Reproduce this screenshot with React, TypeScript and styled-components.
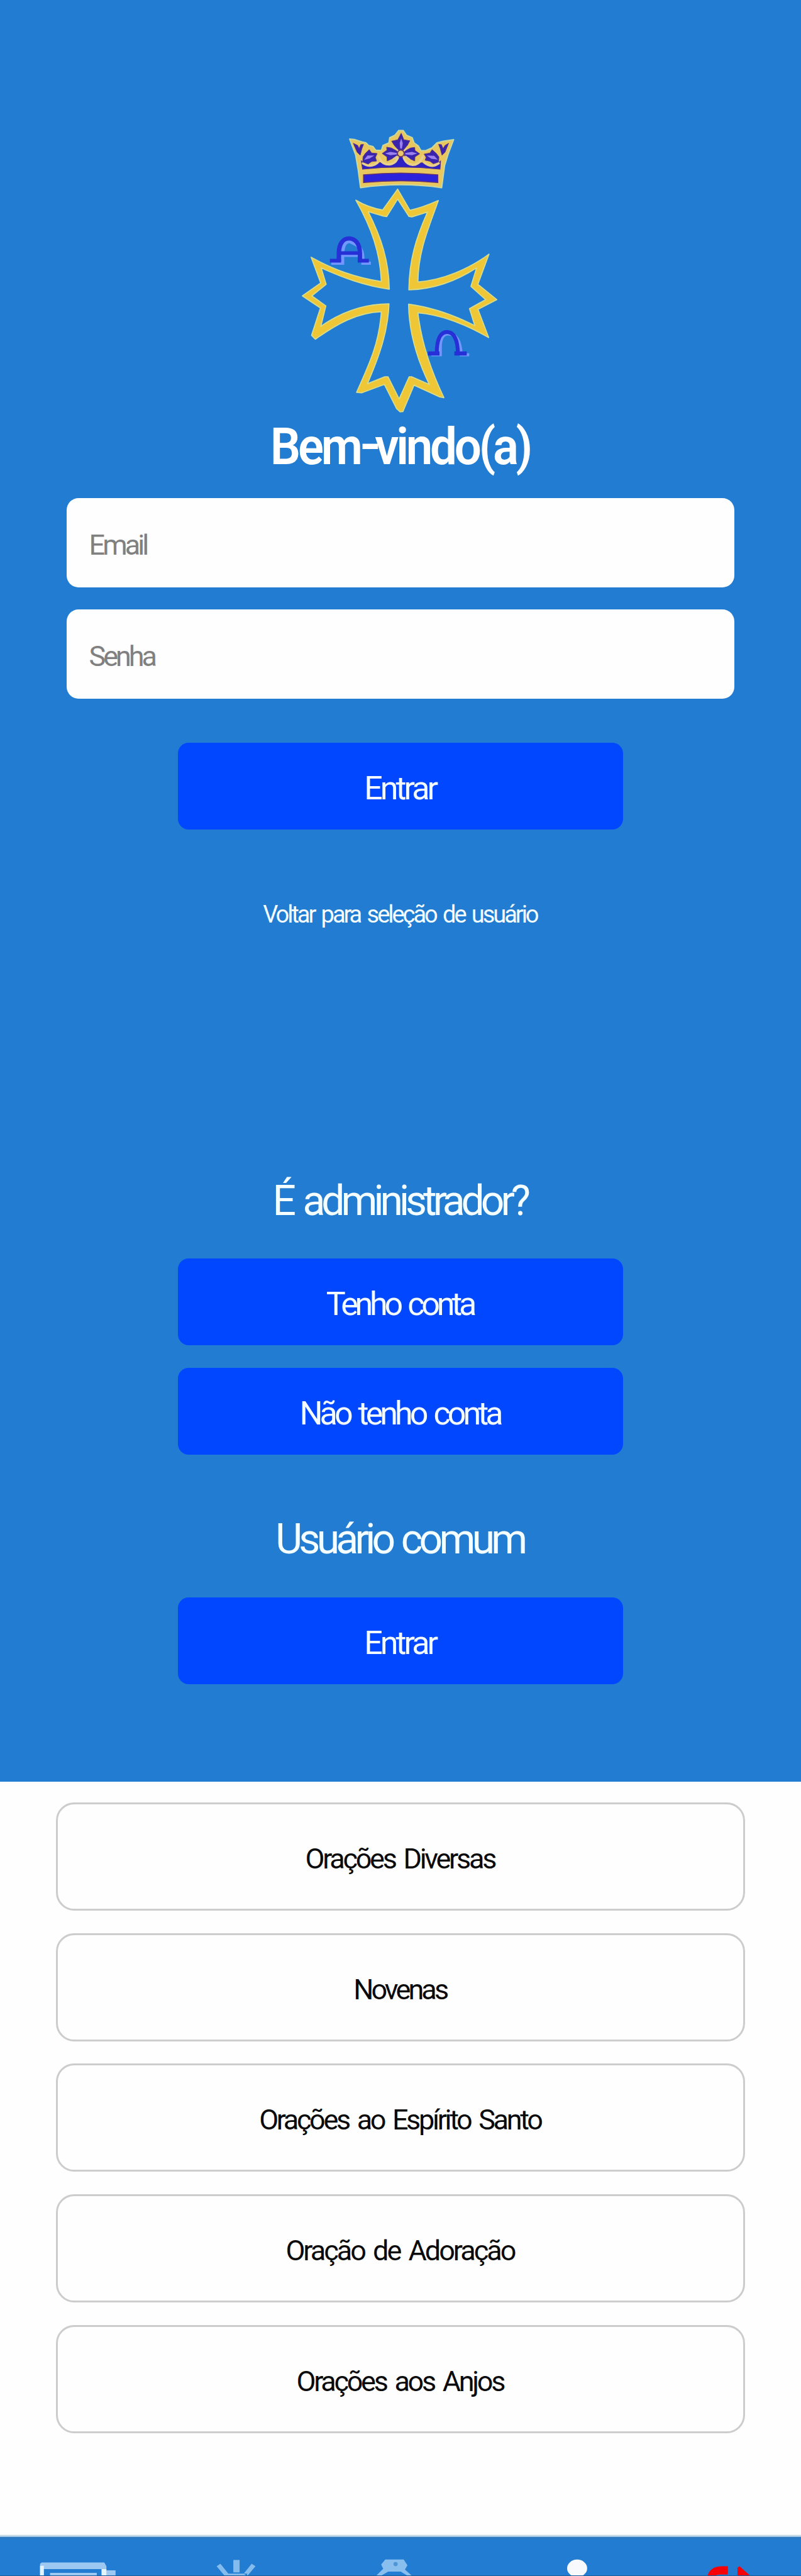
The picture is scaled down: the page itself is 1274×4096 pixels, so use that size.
import React from 'react';
import styled, { createGlobalStyle } from 'styled-components';

const BLUE = '#227dd2';
const ACTION = '#0047ff';

const GlobalStyle = createGlobalStyle`
  *, *::before, *::after { box-sizing: border-box; }
  body { margin: 0; background: #fefefe; font-family: Roboto, "Liberation Sans", sans-serif; }
`;

const Page = styled.div`
  display: flex;
  flex-direction: column;
  width: 1274px;
  height: 4096px;
  overflow: hidden;
  background: #fefefe;
`;

const Login = styled.section`
  display: flex;
  flex-direction: column;
  align-items: center;
  flex: none;
  height: 2833px;
  padding-top: 199px;
  background: ${BLUE};
  color: #f4fdff;
`;

/* Tight tracking; the indent balances part of the trailing letter gap on centred lines. */
const Line = styled.span<{ $track: number; $word?: number }>`
  display: block;
  letter-spacing: ${(p) => p.$track}px;
  word-spacing: ${(p) => p.$word ?? 0}px;
  text-indent: ${(p) => p.$track * 0.4}px;
  white-space: nowrap;
`;

const Emblem = styled.svg`
  display: block;
  flex: none;
  width: 345px;
  height: 462px;
`;

const Title = styled.h1`
  margin: 1px 0 34px;
  font-size: 82px;
  font-weight: 600;
  line-height: 96px;
  color: #fff;
  transform: scaleX(0.93);
`;

const Dash = styled.span`
  display: inline-block;
  text-indent: 0;
  transform: translate(2px, -3px) scaleX(1.2);
`;

const Fields = styled.div`
  display: flex;
  flex-direction: column;
  gap: 35px;
  width: 1062px;
  margin-bottom: 70px;
`;

const Field = styled.div`
  display: flex;
  align-items: center;
  height: 142px;
  padding: 6px 37px 0;
  border-radius: 19px;
  background: #fefefe;
  color: #808080;
  font-size: 45px;
`;

const Action = styled.button`
  display: flex;
  align-items: center;
  justify-content: center;
  flex: none;
  width: 708px;
  height: 138px;
  padding: 6px 0 0;
  border: 0;
  border-radius: 17px;
  background: ${ACTION};
  color: #f4fbff;
  font-family: inherit;
  font-size: 52px;
`;

const BackLink = styled.a`
  margin: 113px 0 395px;
  font-size: 38px;
  line-height: 44px;
`;

const Heading = styled.h2`
  margin: 0;
  font-size: 66px;
  font-weight: 400;
  line-height: 78px;
`;

const Choices = styled.div<{ $top: number }>`
  display: flex;
  flex-direction: column;
  gap: 36px;
  margin-top: ${(p) => p.$top}px;
`;

const CommonUser = styled.div`
  display: flex;
  flex-direction: column;
  align-items: center;
  margin-top: 96px;
`;

const Prayers = styled.section`
  display: flex;
  flex-direction: column;
  gap: 35.7px;
  flex: 1;
  padding: 33px 89px 0;
`;

const Prayer = styled.button`
  display: flex;
  align-items: center;
  justify-content: center;
  flex: none;
  height: 172px;
  padding: 7px 0 0;
  border: 3px solid #cccccc;
  border-radius: 29px;
  background: #fefefe;
  color: #0a0a0a;
  font-family: inherit;
  font-size: 45px;
`;

const TabBar = styled.nav`
  display: grid;
  grid-template-columns: repeat(5, 1fr);
  flex: none;
  height: 66px;
  padding-top: 4px;
  background: linear-gradient(#f4f3ee 0, #8fbce3 4px, #2f78b9 4px, ${BLUE} 9px, ${BLUE} 65px, #17609f 65px);
`;

const TabIcon = styled.svg`
  display: block;
  width: 100%;
  height: 61px;
`;

function Crown() {
  return (
    <g>
      <path
        d="M412 160L445 163L500 180L530 187L548 206L580 214L600 240L640 242L652 205L694 188L700 150L738 132L765 98H797L820 132L862 150L876 188L905 208L925 243L962 242L1005 222L1040 187L1085 175L1160 164L1120 270L1095 350L1074 510Q780 468 490 510L473 380L455 275Z"
        fill="#e9c75f" stroke="#c9d9a0" strokeWidth="9" strokeLinejoin="round"
      />
      <path d="M512 417Q780 392 1046 417V473Q780 448 512 473Z" fill="#2c22dc" stroke="#63306f" strokeWidth="7" />
      <path d="M496 318L505 377Q780 346 1062 377L1066 318L1030 350L990 352L930 330L890 348L835 338L805 300L780 285L755 300L725 340L680 350L632 328L575 354L525 344Z" fill="#2f22c4" stroke="#52308a" strokeWidth="5" />
      <path d="M508 335Q560 370 612 330M620 285Q640 345 700 342Q740 338 758 296M802 296Q820 342 866 346Q915 345 938 285M950 330Q1000 372 1052 335" fill="none" stroke="#e9cf8c" strokeWidth="17" strokeLinecap="round" />
      <g fill="#3a24ad" stroke="#5b3280" strokeWidth="4" strokeLinejoin="round">
        <path d="M438 190L470 206L480 228L492 200L512 198L500 230L488 276L466 255Z" />
        <path d="M1124 190L1098 206L1084 228L1072 200L1052 198L1064 230L1076 276L1098 255Z" />
        <path d="M553 236L570 260L610 264L597 292L606 318L570 322L545 340L506 325L508 288L524 264Z" />
        <path d="M1005 236L990 260L948 268L962 292L954 312L990 320L1014 338L1052 325L1054 288L1036 264Z" />
        <path d="M783 118L802 165L845 172L828 205L818 216L798 240H764L742 216L732 204L714 175L758 165Z" />
        <path d="M646 264L680 240L678 218L712 224L756 248V280L712 304L682 318L680 288Z" />
        <path d="M916 266L882 242L880 220L850 224L806 248V280L850 304L880 318L882 288Z" />
      </g>
      <g fill="#9b82ec">
        <path d="M783 155L794 190L788 228H776L772 190Z" />
        <path d="M666 264L705 252L752 260V270L705 276Z" />
        <path d="M898 264L860 252L812 260V270L860 276Z" />
        <path d="M516 310L540 278L590 278L555 300Z" />
        <path d="M1046 308L1020 280L966 278L1000 302Z" />
      </g>
      <path d="M740 226L762 246M824 226L802 246M722 306L754 282M844 306L812 282" stroke="#e0c7a0" strokeWidth="10" />
      <circle cx="780" cy="263" r="24" fill="#ecc66a" stroke="#6b3a62" strokeWidth="8" />
    </g>
  );
}

function Logo() {
  return (
    <Emblem viewBox="0 60 1560 2090" preserveAspectRatio="none" aria-hidden="true">
      <Crown />
      <path
        fillRule="evenodd" fill="#efc636" stroke="#d6dc8c" strokeWidth="8" strokeLinejoin="round"
        d="M757 520L845 672Q930 655 1050 602C985 790 905 960 903 1188C1080 1175 1270 1095 1414 988L1334 1205L1470 1315L1335 1385L1412 1588C1250 1495 1080 1425 903 1410C925 1600 980 1790 1090 2020L1060 2015L875 1930L795 2120L775 2122L750 2100L662 1925L500 1985L462 1982C560 1765 625 1620 640 1402C460 1410 320 1490 165 1600L138 1572L202 1375L72 1288L204 1195L135 1010C300 1100 450 1155 640 1185C632 980 570 800 457 600Q550 655 650 670Z
           M757 592L678 718L655 714L545 682C640 870 695 1040 697 1240C520 1215 370 1160 207 1087L243 1205L140 1288L241 1360L205 1507C350 1405 520 1345 695 1345C688 1540 630 1710 540 1920L665 1870H688L768 2030L840 1870H858L985 1925C890 1730 838 1530 836 1348C1000 1370 1160 1425 1312 1502L1274 1380L1390 1315L1284 1220L1325 1087C1170 1185 1020 1240 838 1245C840 1030 890 870 972 685L860 720L838 716Z"
      />
      <g fill="none" strokeLinejoin="miter">
        <g stroke="#7397ff" strokeWidth="22">
          <path d="M280 1053H362V1000C362 920 385 897 413 897C455 920 507 930 507 1010V1053H565M362 997H495" />
          <path d="M1000 1712H1064V1650C1066 1580 1090 1562 1120 1562C1180 1562 1208 1610 1214 1712H1272" />
        </g>
        <g stroke="#2630d6">
          <path d="M270 1035H350M470 1035H550M340 980H485" strokeWidth="27" />
          <path d="M334 1042V980C334 905 370 875 407 875C450 875 485 910 486 980V1042" strokeWidth="31" />
          <path d="M975 1702H1058M1165 1702H1254" strokeWidth="29" />
          <path d="M1038 1708C1038 1600 1066 1548 1113 1548C1160 1548 1190 1600 1191 1708" strokeWidth="28" />
        </g>
      </g>
    </Emblem>
  );
}

const tabIcons = [
  <g fill="#9cc8f1">
    <path d="M100 6141H250L255 6150V6160H277V6174H243V6157H105V6174H96V6144Z" />
    <path d="M96 6149H105V6174H96ZM244 6157H255V6174H244Z" fill="#e2f5ff" />
    <path d="M120 6166H232V6174H120Z" />
  </g>,
  <g fill="#85bcee">
    <path d="M559 6135H574V6165H559ZM519 6150L528 6144L547 6168L539 6174ZM612 6150L603 6144L584 6168L592 6174ZM541 6168H592V6174H541Z" />
  </g>,
  <g fill="#89bfef">
    <path d="M923 6134H967L976 6148L970 6158L988 6174H978L960 6163H930L911 6174H900L918 6156L913 6146Z" />
    <circle cx="947.6" cy="6145" r="5" fill="#4e94d6" />
  </g>,
  <ellipse cx="1384" cy="6155" rx="24" ry="21" fill="#f7f9fc" />,
  <g fill="#f80006">
    <path d="M1696 6174Q1702 6150 1731 6150H1745V6170H1727Q1717 6170 1714 6174ZM1768 6174V6153L1773 6150L1800 6174Z" />
  </g>,
];

const prayers: { label: string; track: number }[] = [
  { label: 'Orações Diversas', track: -3.3 },
  { label: 'Novenas', track: -3.9 },
  { label: 'Orações ao Espírito Santo', track: -3.35 },
  { label: 'Oração de Adoração', track: -3 },
  { label: 'Orações aos Anjos', track: -3.3 },
];

export default function App() {
  return (
    <Page>
      <GlobalStyle />
      <Login>
        <Logo />
        <Title><Line $track={-4.6}>Bem<Dash>-</Dash>vindo(a)</Line></Title>
        <Fields>
          <Field><Line $track={-3.9}>Email</Line></Field>
          <Field><Line $track={-4}>Senha</Line></Field>
        </Fields>
        <Action><Line $track={-4}>Entrar</Line></Action>
        <BackLink><Line $track={-3.05} $word={4}>Voltar para seleção de usuário</Line></BackLink>
        <Heading><Line $track={-6} $word={6}>É administrador?</Line></Heading>
        <Choices $top={52}>
          <Action><Line $track={-5.2} $word={4.5}>Tenho conta</Line></Action>
          <Action><Line $track={-4.95} $word={5}>Não tenho conta</Line></Action>
        </Choices>
        <CommonUser>
          <Heading><Line $track={-5.7} $word={3.5}>Usuário comum</Line></Heading>
          <Choices $top={53}>
            <Action><Line $track={-4}>Entrar</Line></Action>
          </Choices>
        </CommonUser>
      </Login>
      <Prayers>
        {prayers.map((p) => (
          <Prayer key={p.label}><Line $track={p.track} $word={5}>{p.label}</Line></Prayer>
        ))}
      </Prayers>
      <TabBar>
        {tabIcons.map((icon, i) => (
          <TabIcon key={i} viewBox={`${384 * i} 6080 384 92`} preserveAspectRatio="none">{icon}</TabIcon>
        ))}
      </TabBar>
    </Page>
  );
}
